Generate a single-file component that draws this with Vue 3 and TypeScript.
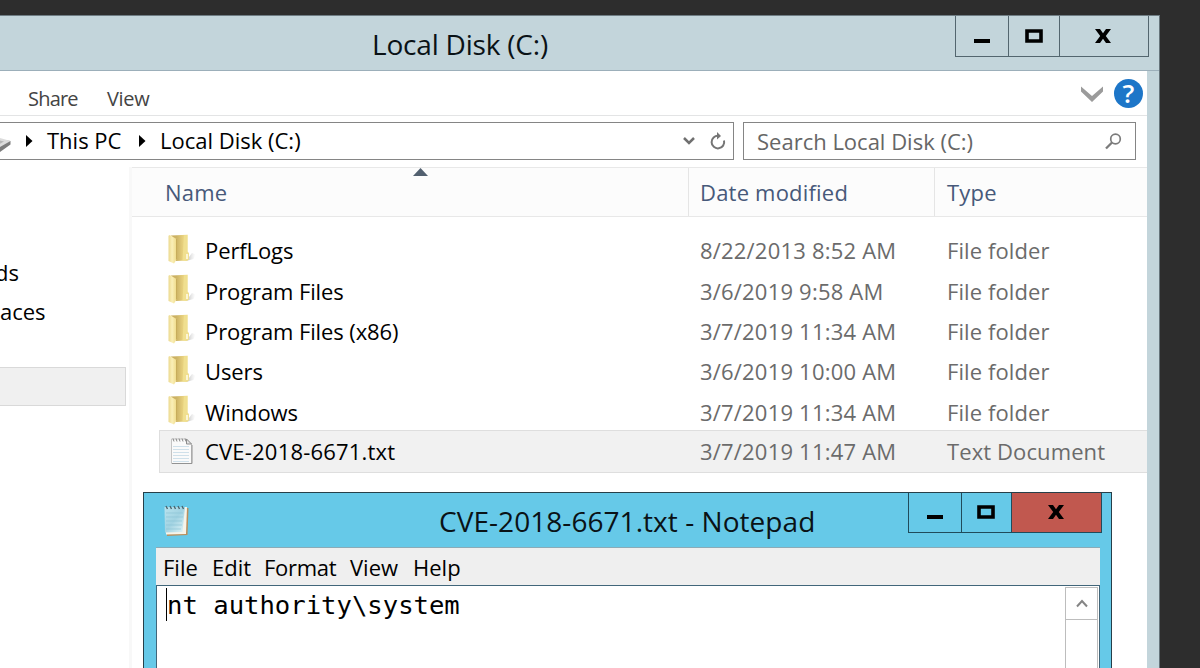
<script setup lang="ts">
interface Entry {
  name: string
  date: string
  type: string
  selected?: boolean
}

const entries: Entry[] = [
  { name: 'PerfLogs', date: '8/22/2013 8:52 AM', type: 'File folder' },
  { name: 'Program Files', date: '3/6/2019 9:58 AM', type: 'File folder' },
  { name: 'Program Files (x86)', date: '3/7/2019 11:34 AM', type: 'File folder' },
  { name: 'Users', date: '3/6/2019 10:00 AM', type: 'File folder' },
  { name: 'Windows', date: '3/7/2019 11:34 AM', type: 'File folder' },
  { name: 'CVE-2018-6671.txt', date: '3/7/2019 11:47 AM', type: 'Text Document', selected: true },
]

const menus: string[] = ['File', 'Edit', 'Format', 'View', 'Help']
</script>

<template>
  <div class="desktop">
    <svg class="defs" width="0" height="0">
      <defs>
        <linearGradient id="flap" x1="0" x2="1"><stop offset="0" stop-color="#ecd98e" /><stop offset=".45" stop-color="#faefb8" /><stop offset="1" stop-color="#efdb8a" /></linearGradient>
        <linearGradient id="back" x1="0" x2="1"><stop offset="0" stop-color="#c9ad5c" /><stop offset=".35" stop-color="#cdb466" /><stop offset=".7" stop-color="#e6cf7c" /><stop offset="1" stop-color="#f3e396" /></linearGradient>
        <linearGradient id="shade" x1="0" x2="1"><stop offset="0" stop-color="#888" stop-opacity=".6" /><stop offset="1" stop-color="#bbb" stop-opacity="0" /></linearGradient>
        <linearGradient id="pad" x1="0" x2="1" y2="1"><stop offset="0" stop-color="#b9e3ee" /><stop offset=".5" stop-color="#a2d3e2" /><stop offset="1" stop-color="#e3f5f8" /></linearGradient>
      </defs>
    </svg>

    <section class="explorer">
      <header class="titlebar">
        <h1 class="title">Local Disk (C:)</h1>
        <div class="controls">
          <span class="ctl min"><svg width="16" height="4"><path d="M0 0h16v4H0z" /></svg></span>
          <span class="ctl max"><svg width="18" height="14"><path d="M2 2h14v10H2z" fill="none" stroke="#000" stroke-width="3.6" /></svg></span>
          <span class="ctl close"><svg width="16" height="14" viewBox="0 0 16 14"><path d="M0 0h5l3 4.200L11 0h5l-5.200 7L16 14h-5L8 9.800 5 14H0l5.200-7z" /></svg></span>
        </div>
      </header>
      <div class="content">
        <nav class="ribbon">
          <span class="tab share">Share</span>
          <span class="tab">View</span>
          <svg class="expand" width="24" height="18" viewBox="0 0 24 18"><path d="M1 1.500v5L12 17 23 6.500v-5L12 11z" fill="#9b9b9b" /></svg>
          <span class="help-button">?</span>
        </nav>
        <div class="bar">
          <div class="address">
            <svg class="drive" width="12" height="22" viewBox="0 0 12 22"><path d="M0 9.500l10.500 1.500v3.500L0 22z" fill="#7c7c7c" /><path d="M0 8l10.500 3L0 17z" fill="#dcdcdc" /><path d="M0 10.500l4 1-4 2.300z" fill="#b5b5b5" /></svg>
            <svg class="arrow one" width="7" height="12"><path d="M0 0l6.500 6L0 12z" /></svg>
            <span class="crumb pc">This PC</span>
            <svg class="arrow two" width="7" height="12"><path d="M0 0l6.500 6L0 12z" /></svg>
            <span class="crumb disk">Local Disk (C:)</span>
            <svg class="drop" width="12" height="10" viewBox="0 0 12 10"><path d="M1 2l5 5 5-5" fill="none" stroke="#707070" stroke-width="2.500" /></svg>
            <svg class="reload" width="18" height="19" viewBox="0 0 18 19"><path d="M15 8.500a6.300 6.300 0 1 1-5.500-4.700" fill="none" stroke="#757575" stroke-width="2" /><path d="M8 0v7.500L12 4z" fill="#757575" /></svg>
          </div>
          <div class="search">
            <span class="hint">Search Local Disk (C:)</span>
            <svg width="17" height="17" viewBox="0 0 17 17"><circle cx="10.500" cy="6" r="4.800" fill="none" stroke="#7b7b7b" stroke-width="1.700" /><path d="M7 9.500L1 15.500" stroke="#7b7b7b" stroke-width="2.300" /></svg>
          </div>
        </div>
        <div class="body">
          <aside class="sidebar">
            <span class="side ds">ds</span>
            <span class="side aces">aces</span>
            <span class="current"></span>
          </aside>
          <main class="listing">
            <div class="columns">
              <span class="col name">Name<svg class="sort" width="15" height="8"><path d="M7.500 0L15 8H0z" fill="#52606f" /></svg></span>
              <span class="col date">Date modified</span>
              <span class="col type">Type</span>
            </div>
            <div class="rows">
              <div v-for="entry in entries" :key="entry.name" class="row" :class="{ selected: entry.selected }">
                <span class="icon">
                  <svg v-if="entry.selected" width="26" height="28" viewBox="0 0 26 28">
                    <path d="M3.500 2h15l5 5v19.500h-20z" fill="#fafafa" stroke="#c4c4c4" />
                    <path d="M18.500 2v5h5z" fill="#e4e4e4" stroke="#8d8d8d" />
                    <path d="M5 1.500l1 3M8 1.500l1 3M11 1.500l1 3M14 1.500l1 3M17 1.500l1 3" stroke="#8a8a8a" />
                    <path d="M5 9.500h16M5 12.500h16M5 15.500h16M5 18.500h16M5 21.500h16M5 24.500h16" stroke="#cfe0ea" />
                    <path d="M4 26.500h20V8" fill="none" stroke="#929292" />
                  </svg>
                  <svg v-else class="folder" width="28" height="30" viewBox="0 0 28 30">
                    <path d="M18 27l6-8 3.500 1.500-2 4.500z" fill="url(#shade)" />
                    <path d="M3 1.500L19.500.8v25.700L8 27z" fill="url(#back)" />
                    <path d="M16 1.500l3.500-.7V17.500l1.500 1.500v6.500l-2.500 1.500-4-.5z" fill="#f0df8f" />
                    <path d="M.5 1.800L1.800 1 8.500 5v20.500L6 29.500.5 27z" fill="url(#flap)" />
                    <path d="M8.500 5v20.500" stroke="#b99b48" stroke-width=".6" />
                    <path d="M19 20v5" stroke="#fffbe6" stroke-width="1.600" />
                  </svg>
                </span>
                <span class="cell name">{{ entry.name }}</span>
                <span class="cell date">{{ entry.date }}</span>
                <span class="cell type">{{ entry.type }}</span>
              </div>
            </div>
          </main>
        </div>
      </div>
    </section>

    <section class="notepad">
      <header class="titlebar">
        <svg class="app" width="30" height="34" viewBox="0 0 30 34">
          <path d="M4 4h22.500l-1 27-20.500 1z" fill="#b98f5d" />
          <path d="M3 3h22l-1 27-20 .5z" fill="#f6f4ea" />
          <path d="M2.500 3H23l-2.500 25-17.500.5z" fill="url(#pad)" />
          <path d="M4 9h17M4 13h17M4 17h16M4 21h16M4 25h15" stroke="#8dc4d6" stroke-width=".7" />
          <path d="M4 2l1.500 3M8 2l1.500 3M12 2l1.500 3M16 2l1.500 3M20 2l1.500 3" stroke="#4b656e" stroke-width="1.400" />
        </svg>
        <h2 class="title">CVE-2018-6671.txt - Notepad</h2>
        <div class="controls">
          <span class="ctl min"><svg width="16" height="4"><path d="M0 0h16v4H0z" /></svg></span>
          <span class="ctl max"><svg width="18" height="14"><path d="M2 2h14v10H2z" fill="none" stroke="#000" stroke-width="3.6" /></svg></span>
          <span class="ctl close"><svg width="16" height="14" viewBox="0 0 16 14"><path d="M0 0h5l3 4.200L11 0h5l-5.200 7L16 14h-5L8 9.800 5 14H0l5.200-7z" /></svg></span>
        </div>
      </header>
      <div class="pane">
        <nav class="menu"><span v-for="item in menus" :key="item" :class="item.toLowerCase()">{{ item }}</span></nav>
        <div class="editor">
          <div class="text"><i class="caret"></i>nt authority\system</div>
          <div class="scroll"><span class="up"><svg width="12" height="9" viewBox="0 0 12 9"><path d="M1 7.500l5-5.500 5 5.500" fill="none" stroke="#858585" stroke-width="2" /></svg></span></div>
        </div>
      </div>
    </section>
  </div>
</template>

<style>
html, body { margin: 0; overflow: hidden; }
</style>

<style scoped>
* { box-sizing: border-box; }
.desktop { position: relative; width: 1200px; height: 668px; overflow: hidden; background: #2d2d2d; padding-top: 15px; font-family: "Open Sans", "Noto Sans", sans-serif; font-size: 22px; color: #000; white-space: pre; }
.defs { position: absolute; }
svg { display: block; flex: none; }
.explorer { width: 1160px; height: 653px; background: #c3d5db; border-top: 1px solid #6f7d84; border-right: 1px solid #66747b; padding-right: 12px; display: flex; flex-direction: column; }
.titlebar { display: flex; flex: none; }
.explorer .titlebar { height: 55px; margin-right: -12px; justify-content: space-between; border-bottom: 1px solid #9cafba; }
.title { margin: 0; font-weight: 400; font-size: 28px; line-height: 36px; color: #0a1216; }
.explorer .title { margin: 10px 0 0 372px; letter-spacing: -0.2px; }
.controls { display: flex; height: 41px; border: 1px solid #53666f; border-top: 0; }
.explorer .controls { width: 194px; margin-right: 10px; }
.ctl { display: flex; justify-content: center; }
.ctl + .ctl { border-left: 1px solid #53666f; }
.min { width: 52px; padding-top: 23px; }
.max { width: 51px; padding: 13px 1px 0 0; }
.close { flex: 1; padding: 13px 2px 0 0; }
.content { flex: 1; background: #fff; display: flex; flex-direction: column; }
.ribbon { height: 45px; border-bottom: 1px solid #e3e4e5; display: flex; align-items: flex-start; padding-left: 28px; color: #444; font-size: 20px; line-height: 28px; }
.tab { margin-top: 14px; letter-spacing: -0.3px; }
.share { width: 79px; letter-spacing: -0.8px; }
.expand { margin: 14px 10px 0 auto; }
.help-button { width: 29px; height: 29px; margin: 8px 4px 0 0; border-radius: 50%; background: #1d76c8; color: #fff; font-size: 26px; font-weight: 600; line-height: 29px; text-align: center; }
.bar { height: 51px; display: flex; padding-top: 6px; gap: 9px; }
.address { width: 734px; height: 38px; border: 1px solid #858585; border-left: 0; display: flex; align-items: center; }
.one { margin-left: 14px; }
.crumb { line-height: 30px; margin-bottom: 2px; }
.pc { width: 92px; margin-left: 14px; }
.disk { margin-left: 14px; }
.drop { margin-left: auto; margin-right: 14px; }
.reload { margin-right: 6px; }
.search { width: 393px; height: 38px; border: 1px solid #858585; display: flex; align-items: center; justify-content: space-between; padding: 0 13px; color: #666; }
.hint { margin-bottom: 1px; }
.body { flex: 1; display: flex; }
.sidebar { width: 132px; display: flex; flex-direction: column; border-right: 3px solid #f8f8f8; padding-right: 3px; }
.side { line-height: 30px; height: 39px; }
.ds { margin-top: 90px; margin-left: -5px; }
.aces { margin-left: 0; }
.current { margin-top: 32px; height: 39px; background: #f0f0f0; border: 1px solid #d9d9d9; border-left: 0; }
.listing { flex: 1; }
.columns { height: 50px; display: flex; background: #fcfcfc; border-top: 1px solid #e8e8e8; border-bottom: 1px solid #e8e8e8; color: #47597a; line-height: 49px; letter-spacing: 0.2px; }
.col.name { position: relative; width: 556px; padding-left: 33px; }
.sort { position: absolute; left: 281px; top: 0; }
.col.date { width: 246px; border-left: 1px solid #e5e5e5; padding-left: 11px; }
.col.type { flex: 1; border-left: 1px solid #e5e5e5; padding-left: 12px; }
.rows { padding: 13px 0 0 27px; }
.row { height: 40.4px; display: flex; align-items: center; border: 1px solid transparent; border-right: 0; }
.row.selected { background: #f1f1f1; border-color: #dedede; height: 43px; margin-top: -2px; }
.icon { width: 45px; padding-left: 8px; }
.folder { margin-bottom: 3px; }
.cell.name { width: 495px; letter-spacing: -0.1px; }
.selected .cell.name { letter-spacing: 0.2px; }
.cell.date { width: 247px; color: #6b6b6b; letter-spacing: 0.2px; }
.cell.type { color: #6b6b6b; letter-spacing: 0.1px; }
.notepad { position: absolute; left: 143px; top: 492px; width: 969px; height: 190px; border: 1px solid #263f49; background: #66c9e8; padding: 0 11px 0 12px; }
.notepad .titlebar { height: 54px; margin-right: -2px; }
.app { margin: 11px 0 0 6px; }
.notepad .title { margin: 10px auto 0 247px; letter-spacing: 0.05px; }
.notepad .controls { width: 194px; height: 40px; border-color: #204b5b; }
.notepad .ctl + .ctl { border-color: #204b5b; }
.notepad .min { padding-top: 22px; }
.notepad .max { width: 50px; padding-top: 12px; }
.notepad .close { background: #c1584f; padding-top: 12px; }
.pane { height: 140px; display: flex; flex-direction: column; border-top: 1px solid #8babb7; background: #efefef; }
.menu { height: 37px; display: flex; padding-left: 7px; line-height: 39px; }
.menu span { flex: none; }
.file { width: 49px; }
.edit { width: 52px; }
.format { width: 86px; letter-spacing: -0.3px; }
.view { width: 63px; }
.editor { flex: 1; display: flex; background: #fff; border: 1px solid #41667a; padding: 1px 1px 0 9px; }
.text { position: relative; flex: 1; padding-left: 1px; font-family: "DejaVu Sans Mono", monospace; font-size: 25.6px; line-height: 36px; }
.caret { position: absolute; left: 0; top: 1px; width: 1px; height: 33px; background: #000; }
.scroll { width: 33px; border: 1px solid #bdbdbd; }
.up { height: 32px; display: flex; align-items: center; justify-content: center; border-bottom: 1px solid #bdbdbd; }
</style>
